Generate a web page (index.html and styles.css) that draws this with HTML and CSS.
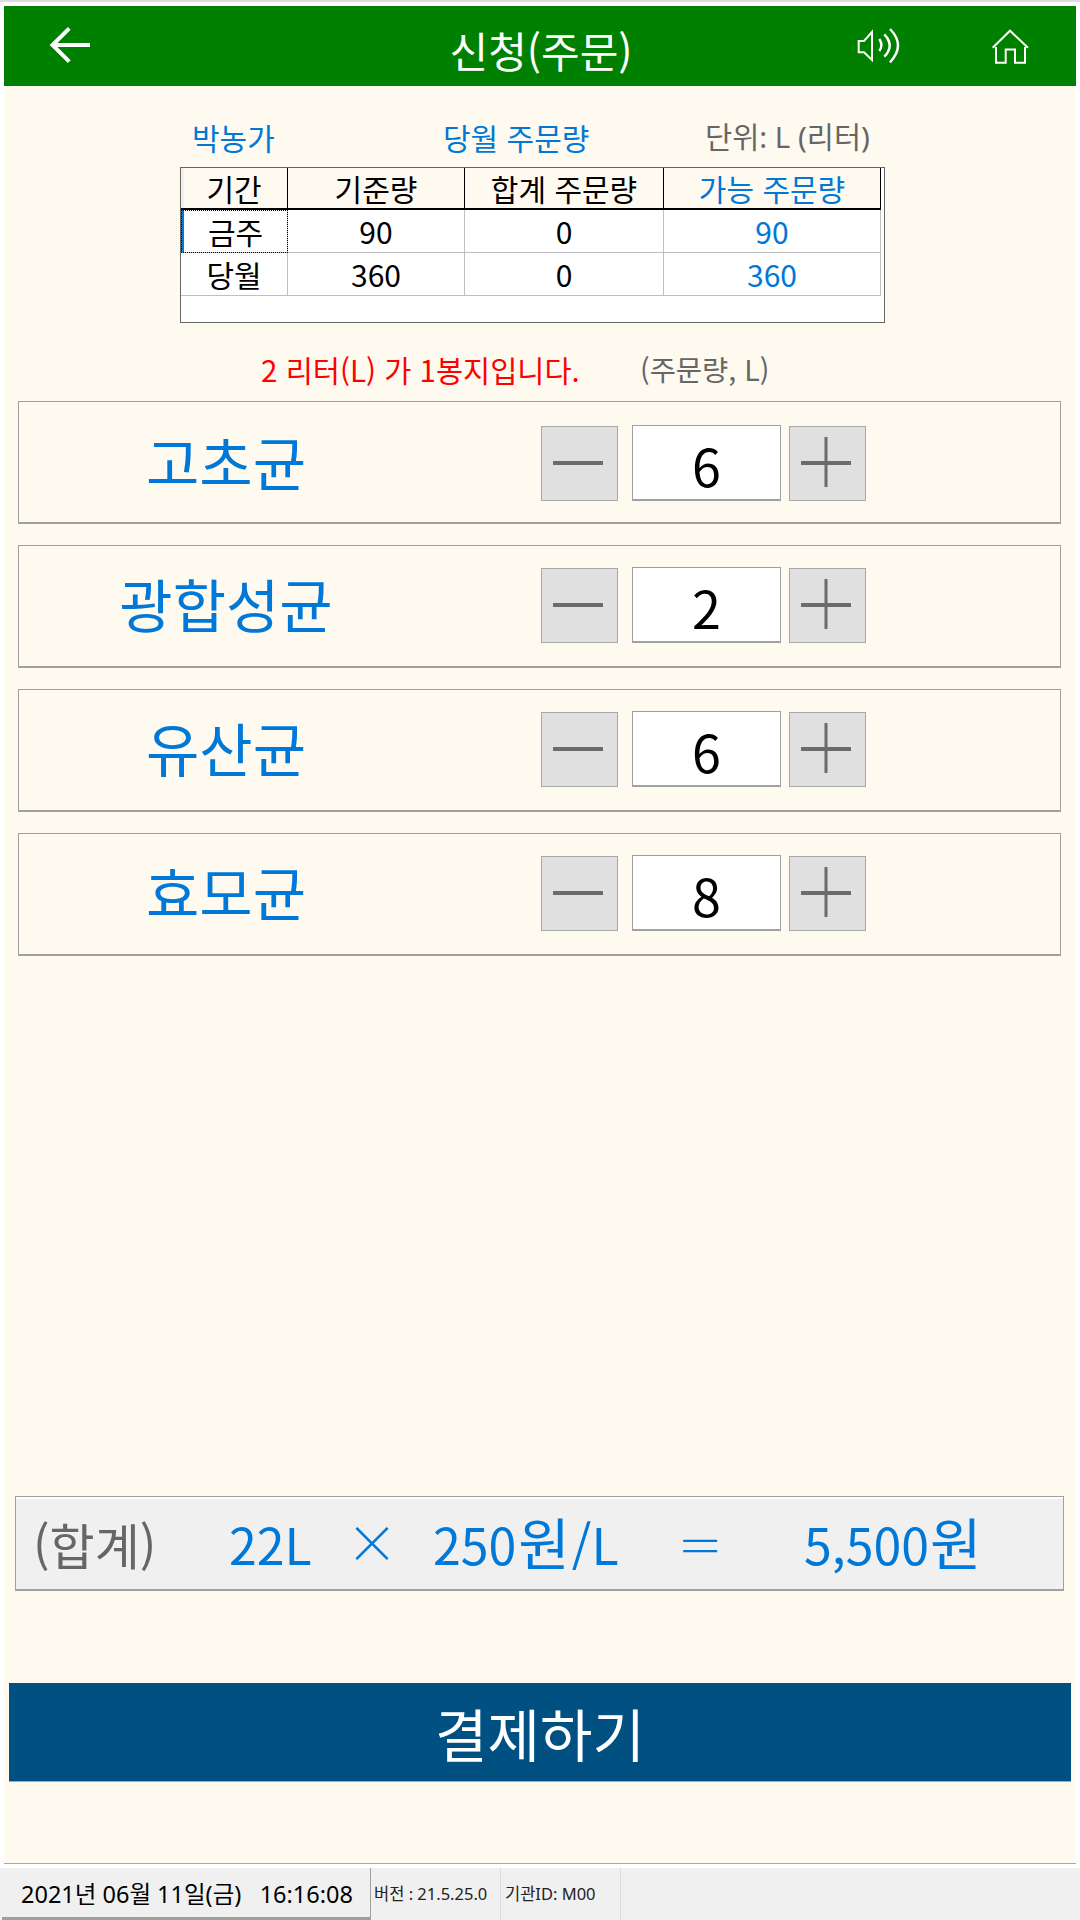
FILE: index.html
```html
<!DOCTYPE html>
<html lang="ko">
<head>
<meta charset="utf-8">
<title>신청(주문)</title>
<link rel="stylesheet" href="styles.css">
</head>
<body>
<div class="frame">
  <div class="screen">
    <header class="topbar">
      <svg class="ico-back" viewBox="48 25 44 40" width="44" height="40"><path d="M69.3 27.3 L52.5 44 L69.3 60.7 M52.5 44 H90" fill="none" stroke="#fff" stroke-width="4"/></svg>
      <h1 class="title">신청(주문)</h1>
      <svg class="ico-sound" viewBox="857 27 44 38" width="44" height="38"><g fill="none" stroke="#fff" stroke-width="2"><path d="M858.7 41 H864 L872 32 V60 L864 52.3 H858.7 Z"/><path d="M879.3 39 Q883.5 45 879.3 51" stroke-width="2.4"/><path d="M884.3 34.3 Q895 45.5 884.3 56.7" stroke-width="2.4"/><path d="M890 29 Q906 45.5 890 62.3" stroke-width="2.4"/></g></svg>
      <svg class="ico-home" viewBox="990 27 42 38" width="42" height="38"><path d="M992.7 47.7 L1010 30.7 L1028 47.7 M996 47 V62.7 H1005.7 V49.5 H1015 V62.7 H1025 V47" fill="none" stroke="#fff" stroke-width="2"/></svg>
    </header>
    <main class="main">
      <div class="meta">
        <span class="meta-farmer">박농가</span>
        <span class="meta-title">당월 주문량</span>
        <span class="meta-unit">단위: L (리터)</span>
      </div>
      <div class="grid-wrap">
        <table class="grid">
          <colgroup><col class="c1"><col class="c2"><col class="c3"><col class="c4"></colgroup>
          <thead>
            <tr><th class="first">기간</th><th>기준량</th><th>합계 주문량</th><th class="blue">가능 주문량</th></tr>
          </thead>
          <tbody>
            <tr><td class="selected">금주</td><td>90</td><td>0</td><td class="blue">90</td></tr>
            <tr><td>당월</td><td>360</td><td>0</td><td class="blue">360</td></tr>
          </tbody>
        </table>
      </div>
      <div class="note">
        <span class="note-red">2 리터(L) 가 1봉지입니다.</span>
        <span class="note-gray">(주문량, L)</span>
      </div>
      <section class="card card-first">
        <div class="card-label">고초균</div>
        <button class="step"><svg viewBox="0 0 75 73" width="75" height="73"><path d="M11 36 H61" stroke="#6b6b6b" stroke-width="4"/></svg></button>
        <div class="qty">6</div>
        <button class="step"><svg viewBox="0 0 75 73" width="75" height="73"><path d="M11 36 H61" stroke="#6b6b6b" stroke-width="4"/><path d="M36 10 V60" stroke="#6b6b6b" stroke-width="3"/></svg></button>
      </section>
      <section class="card">
        <div class="card-label">광합성균</div>
        <button class="step"><svg viewBox="0 0 75 73" width="75" height="73"><path d="M11 36 H61" stroke="#6b6b6b" stroke-width="4"/></svg></button>
        <div class="qty">2</div>
        <button class="step"><svg viewBox="0 0 75 73" width="75" height="73"><path d="M11 36 H61" stroke="#6b6b6b" stroke-width="4"/><path d="M36 10 V60" stroke="#6b6b6b" stroke-width="3"/></svg></button>
      </section>
      <section class="card">
        <div class="card-label">유산균</div>
        <button class="step"><svg viewBox="0 0 75 73" width="75" height="73"><path d="M11 36 H61" stroke="#6b6b6b" stroke-width="4"/></svg></button>
        <div class="qty">6</div>
        <button class="step"><svg viewBox="0 0 75 73" width="75" height="73"><path d="M11 36 H61" stroke="#6b6b6b" stroke-width="4"/><path d="M36 10 V60" stroke="#6b6b6b" stroke-width="3"/></svg></button>
      </section>
      <section class="card">
        <div class="card-label">효모균</div>
        <button class="step"><svg viewBox="0 0 75 73" width="75" height="73"><path d="M11 36 H61" stroke="#6b6b6b" stroke-width="4"/></svg></button>
        <div class="qty">8</div>
        <button class="step"><svg viewBox="0 0 75 73" width="75" height="73"><path d="M11 36 H61" stroke="#6b6b6b" stroke-width="4"/><path d="M36 10 V60" stroke="#6b6b6b" stroke-width="3"/></svg></button>
      </section>
      <div class="sum">
        <span class="sum-label">(합계)</span>
        <span>22L</span>
        <span class="sym-x">×</span>
        <span>250<span class="won">원</span>/L</span>
        <span class="sym-eq">＝</span>
        <span>5,500<span class="won won-end">원</span></span>
      </div>
      <button class="pay">결제하기</button>
    </main>
  </div>
</div>
<footer class="status">
  <div class="st-date">2021년 06월 11일(금)   16:16:08</div>
  <div class="st-ver">버전 : 21.5.25.0</div>
  <div class="st-org">기관ID: M00</div>
</footer>
</body>
</html>
```
FILE: styles.css
```css
* { box-sizing: border-box; }
html, body { margin: 0; padding: 0; }
body {
  width: 1080px;
  height: 1920px;
  background: #f0f0f0;
  font-family: "Noto Sans CJK KR", "Noto Sans", sans-serif;
  overflow: hidden;
}
.frame {
  height: 1868px;
  background: #fff;
  border-top: 2px solid #dcdcdc;
  padding: 4px 4px 4px 4px;
}
.screen {
  height: 1858px;
  display: flex;
  flex-direction: column;
  background: #fffaf0;
  border-bottom: 1px solid #a8a8a8;
}
.topbar {
  flex: none;
  height: 80px;
  background: #008000;
  display: flex;
  align-items: center;
}
.ico-back { margin-left: 44px; flex: none; }
.title {
  margin: 7px 0 0 269px;
  width: 360px;
  flex: none;
  text-align: center;
  color: #fff;
  font-size: 42px;
  font-weight: 400;
  line-height: 50px;
}
.ico-sound { margin-left: 136px; flex: none; }
.ico-home { margin-left: 89px; flex: none; }

.main {
  flex: 1;
  display: flex;
  flex-direction: column;
  padding-bottom: 81px;
}
.meta {
  margin-top: 33px;
  height: 36px;
  line-height: 36px;
  font-size: 30px;
  display: flex;
  padding-left: 188px;
  white-space: nowrap;
}
.meta-farmer { width: 251px; color: #0078d7; }
.meta-title { width: 262px; color: #0078d7; }
.meta-unit { color: #666; font-size: 29.5px; font-family: "Noto Sans", "Noto Sans CJK KR", sans-serif; }

.grid-wrap {
  margin: 12px 0 0 176px;
  width: 705px;
  height: 156px;
  border: 1px solid #666;
  background: #fff;
}
.grid {
  border-collapse: separate;
  border-spacing: 0;
  table-layout: fixed;
  width: 700px;
  font-size: 30px;
  color: #000;
}
.c1 { width: 107px; }
.c2 { width: 177px; }
.c3 { width: 199px; }
.c4 { width: 217px; }
.grid th, .grid td {
  padding: 0;
  text-align: center;
  font-weight: 400;
  line-height: 36px;
}
.grid th {
  height: 42px;
  background: #fffaf0;
  border-right: 1px solid #000;
  border-bottom: 2px solid #000;
}
.grid th.first { box-shadow: inset 3px 0 0 #f0f0f0; }
.grid td {
  height: 43px;
  border-right: 1px solid #c0c0c0;
  border-bottom: 1px solid #c0c0c0;
}
.grid .blue { color: #0078d7; }
.grid td.selected {
  border-left: 3px solid #0078d7;
  outline: 1px dotted #000;
  outline-offset: -1px;
}

.note {
  margin: 28px 0 3px;
  height: 36px;
  line-height: 36px;
  font-size: 29.5px;
  display: flex;
  padding-left: 257px;
  white-space: nowrap;
}
.note-red { width: 379px; color: #f00; }
.note-gray { color: #666; font-size: 28.5px; }

.card {
  margin: 11px 0 10px 14px;
  width: 1043px;
  height: 123px;
  flex: none;
  border: 1px solid #a0a0a0;
  border-bottom-width: 2px;
  display: flex;
  align-items: center;
  padding-bottom: 2px;
}
.card-first { padding: 2px 0 0; }
.card-label {
  width: 414px;
  text-align: center;
  color: #0078d7;
  font-size: 58px;
  line-height: 70px;
  white-space: nowrap;
  margin-top: -4px;
}
.step {
  flex: none;
  width: 77px;
  height: 75px;
  padding: 0;
  display: block;
  background: #e0e0e0;
  border: 1px solid #a8a8a8;
  border-radius: 0;
  margin-left: 108px;
}
.step svg { display: block; }
.qty {
  flex: none;
  width: 149px;
  height: 76px;
  margin: -1px 8px 0 14px;
  background: #fff;
  border: 1px solid #a0a0a0;
  border-bottom-width: 2px;
  color: #000;
  font-size: 52px;
  line-height: 78px;
  text-align: center;
}
.qty + .step { margin-left: 0; }

.sum {
  margin: auto 0 0 11px;
  width: 1049px;
  height: 95px;
  flex: none;
  background: #f0f0f0;
  border: 1px solid #a0a0a0;
  border-bottom-width: 2px;
  box-shadow: inset 0 2px 0 #fff;
  display: grid;
  grid-template-columns: 196px 117px 87px 244px 127px auto;
  align-items: center;
  padding-left: 17px;
  color: #0078d7;
  font-size: 50px;
  white-space: nowrap;
}
.sum-label { color: #666; font-size: 49px; }
.won { font-size: 56px; line-height: 1; margin: 0 2px; }
.won-end { margin: 0 0 0 1px; }
.sym-x { font-size: 52px; font-weight: 300; line-height: 1; margin-top: -4px; }
.sym-eq { font-size: 46px; font-weight: 300; line-height: 1; }

.pay {
  margin: 92px 0 0 5px;
  width: 1062px;
  height: 99px;
  flex: none;
  padding: 0;
  background: #005082;
  border: 0;
  border-bottom: 1px solid #b0a890;
  color: #fff;
  font-family: inherit;
  font-size: 57px;
}

.status {
  height: 52px;
  display: flex;
  align-items: stretch;
  color: #222;
  white-space: pre;
  padding-left: 2px;
  font-family: "Noto Sans", "Noto Sans CJK KR", sans-serif;
}
.st-date {
  width: 369px;
  padding-left: 19px;
  font-size: 23.5px;
  line-height: 52px;
  color: #000;
  border-right: 1px solid #a0a0a0;
  border-bottom: 3px solid #a0a0a0;
}
.st-ver, .st-org {
  font-size: 16.5px;
  line-height: 52px;
  padding-left: 3px;
  width: 130px;
  border-right: 1px solid #dcdcdc;
}
.st-org { width: 120px; padding-left: 4px; }
```
